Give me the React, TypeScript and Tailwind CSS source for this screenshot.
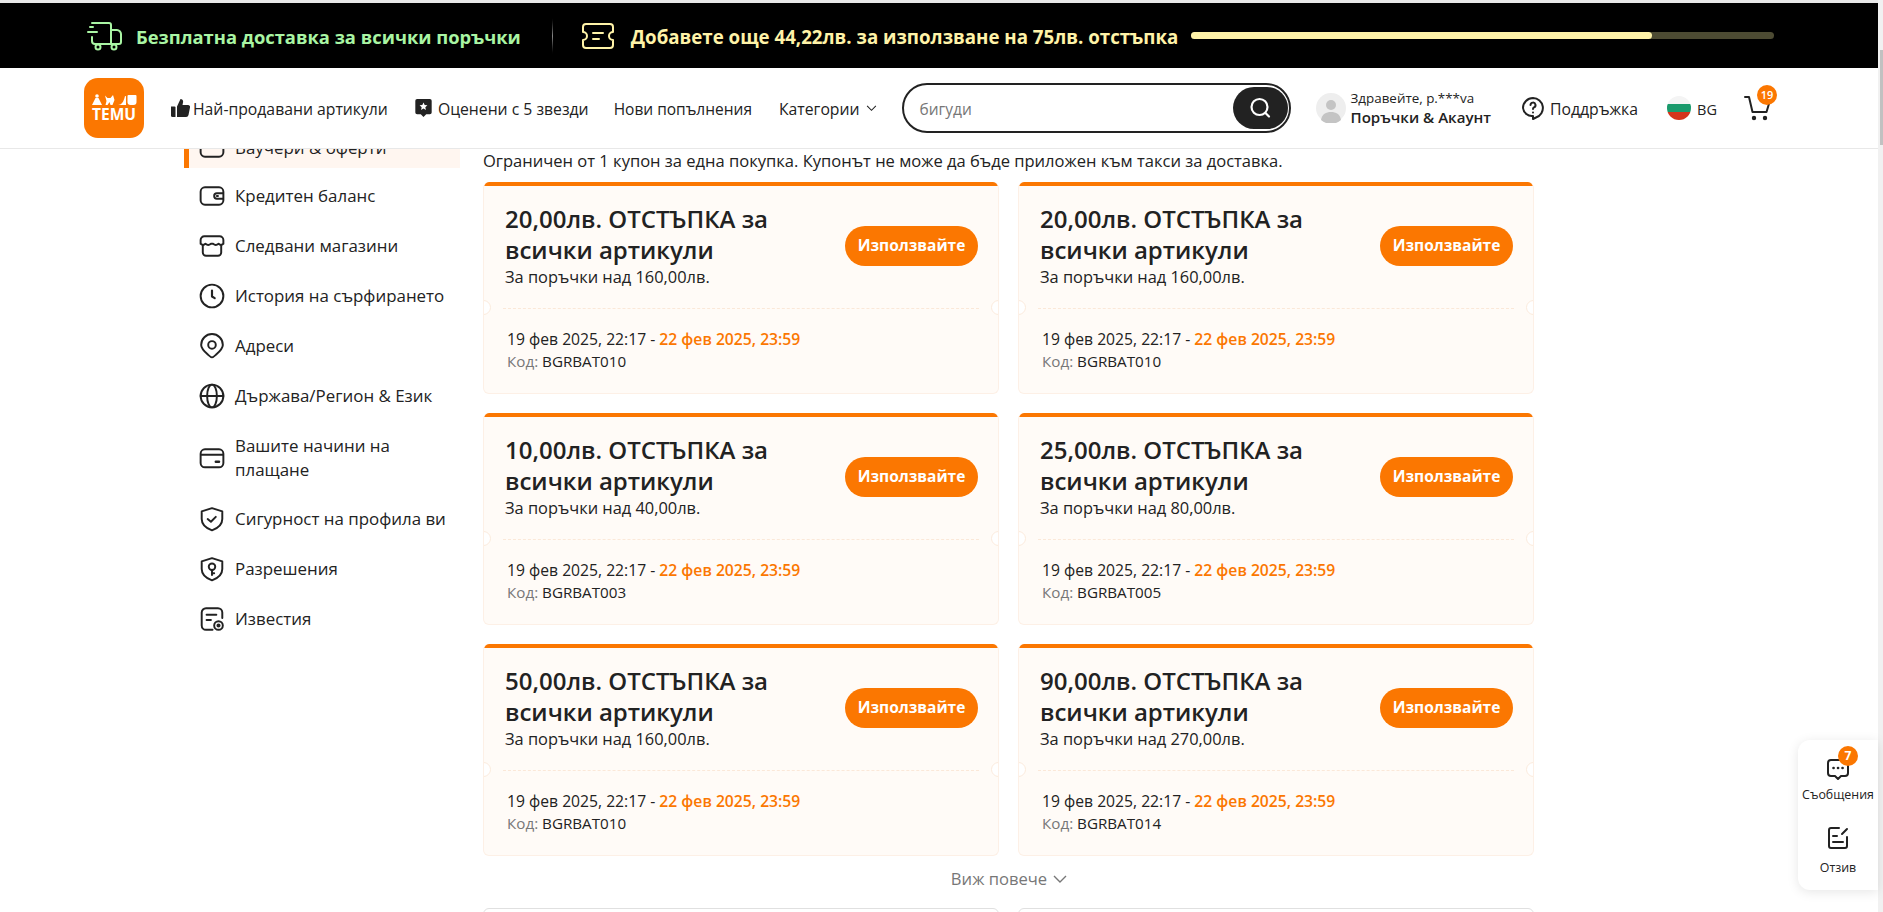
import React from 'react';

const font = { fontFamily: '"Open Sans", "Noto Sans", sans-serif' };

interface Coupon {
  amount: string;
  min: string;
  code: string;
}

const coupons: Coupon[] = [
  { amount: '20,00', min: '160,00', code: 'BGRBAT010' },
  { amount: '20,00', min: '160,00', code: 'BGRBAT010' },
  { amount: '10,00', min: '40,00', code: 'BGRBAT003' },
  { amount: '25,00', min: '80,00', code: 'BGRBAT005' },
  { amount: '50,00', min: '160,00', code: 'BGRBAT010' },
  { amount: '90,00', min: '270,00', code: 'BGRBAT014' },
];

const Ico: React.FC<{ children: React.ReactNode }> = ({ children }) => (
  <svg viewBox="0 0 24 24" fill="none" stroke="currentColor" strokeWidth="1.8" strokeLinecap="round" strokeLinejoin="round" className="w-[26px] h-[26px] shrink-0 text-[#222]">
    {children}
  </svg>
);

const sideItems: { label: React.ReactNode; icon: React.ReactNode; h: string }[] = [
  {
    label: 'Кредитен баланс',
    h: 'h-[50px]',
    icon: (
      <Ico>
        <rect x="1.5" y="4" width="21" height="16" rx="4" />
        <path d="M22 9.5h-5.5a2.5 2.5 0 0 0 0 5H22" />
        <path d="M16.5 12h1" />
      </Ico>
    ),
  },
  {
    label: 'Следвани магазини',
    h: 'h-[50px]',
    icon: (
      <Ico>
        <path d="M5 3h14a3.500 3.500 0 0 1 3.500 3.500V10c-1.500 1.400-3 1.400-4.500 0-1.700 1.400-3.300 1.400-5 0h-2c-1.700 1.400-3.300 1.400-5 0-1.500 1.400-3 1.400-4.500 0V6.500A3.500 3.500 0 0 1 5 3z" />
        <path d="M3.500 11.500V18a3 3 0 0 0 3 3h11a3 3 0 0 0 3-3v-6.500" />
      </Ico>
    ),
  },
  {
    label: 'История на сърфирането',
    h: 'h-[50px]',
    icon: (
      <Ico>
        <circle cx="12" cy="12" r="10.500" />
        <path d="M12 7v5.500l2.500 1.500" strokeWidth="2" />
      </Ico>
    ),
  },
  {
    label: 'Адреси',
    h: 'h-[50px]',
    icon: (
      <Ico>
        <path d="M12 22.500c-1 0-2-.9-3.500-2.300C5.500 17.500 2 14.500 2 11a10 10 0 0 1 20 0c0 3.500-3.500 6.500-6.500 9.200-1.500 1.400-2.500 2.300-3.500 2.300z" />
        <circle cx="12" cy="11" r="3.500" />
      </Ico>
    ),
  },
  {
    label: 'Държава/Регион & Език',
    h: 'h-[50px]',
    icon: (
      <Ico>
        <circle cx="12" cy="12" r="10.500" />
        <ellipse cx="12" cy="12" rx="4.500" ry="10.500" />
        <path d="M1.500 12h21" />
      </Ico>
    ),
  },
  {
    label: (
      <>
        Вашите начини на
        <br />
        плащане
      </>
    ),
    h: 'h-[73px]',
    icon: (
      <Ico>
        <rect x="1.500" y="4" width="21" height="16.500" rx="4" />
        <path d="M2 9h20" />
        <path d="M15.500 15.500h3" strokeWidth="2.200" />
      </Ico>
    ),
  },
  {
    label: 'Сигурност на профила ви',
    h: 'h-[50px]',
    icon: (
      <Ico>
        <path d="M12 2l9.500 3v7c0 5-4 8.500-9.500 10.500C6.500 20.500 2.500 17 2.500 12V5z" />
        <path d="M8 12l3 2.500 4.500-4.500" />
      </Ico>
    ),
  },
  {
    label: 'Разрешения',
    h: 'h-[50px]',
    icon: (
      <Ico>
        <path d="M12 2l9.500 3v7c0 5-4 8.500-9.500 10.500C6.500 20.500 2.500 17 2.500 12V5z" />
        <circle cx="12" cy="10" r="3" />
        <path d="M12 13v4.500M12 16h2" />
      </Ico>
    ),
  },
  {
    label: 'Известия',
    h: 'h-[50px]',
    icon: (
      <Ico>
        <path d="M21.500 11V6a4 4 0 0 0-4-4h-11a4 4 0 0 0-4 4v12a4 4 0 0 0 4 4h6" />
        <path d="M7 8h9M7 13h4" />
        <circle cx="18" cy="18" r="4" />
        <circle cx="18" cy="18" r="1" fill="currentColor" />
      </Ico>
    ),
  },
];

const CouponCard: React.FC<{ coupon: Coupon }> = ({ coupon }) => (
  <div className="relative h-[212px] rounded-[6px] border border-t-0 border-[#fdf0e6] bg-[#fffbf7] overflow-hidden">
    <div className="h-[4px] -mx-px bg-[#fb7701]" />
    <div className="h-[122px] pl-[21px] pr-[20px] flex items-center justify-between">
      <div className="pb-[4px]">
        <div className="w-[290px] text-[24px] leading-[31px] font-semibold text-[#222]">
          {`${coupon.amount}лв. ОТСТЪПКА за всички артикули`}
        </div>
        <div className="mt-[1px] text-[16.4px] leading-[22px] text-[#222]">{`За поръчки над ${coupon.min}лв.`}</div>
      </div>
      <button className="mb-[2px] h-[40px] w-[133px] rounded-full bg-[#fb7701] text-white text-[15.5px] font-bold">Използвайте</button>
    </div>
    <div className="mx-[19px] border-t border-dashed border-[#fbe8d8]" />
    <div className="pl-[23px] pt-[18px]">
      <div className="text-[15.7px] leading-[24px] text-[#222]">
        19 фев 2025, 22:17 - <span className="font-semibold text-[#fb7701]">22 фев 2025, 23:59</span>
      </div>
      <div className="text-[15.2px] leading-[20px] text-[#222]">
        <span className="text-[#777]">Код:</span> {coupon.code}
      </div>
    </div>
    <span className="absolute -left-[8px] top-[118px] w-[15px] h-[15px] rounded-full bg-white border border-[#fbeadc]" />
    <span className="absolute -right-[8px] top-[118px] w-[15px] h-[15px] rounded-full bg-white border border-[#fbeadc]" />
  </div>
);

export default function App() {
  return (
    <div className="h-[912px] w-full overflow-hidden flex bg-white text-[#222]" style={font}>
      <div className="flex-1 min-w-0 flex flex-col relative">
        <div className="h-[3px] bg-[#e8e8e8] shrink-0" />

        {/* top banner */}
        <div className="h-[65px] bg-black shrink-0 flex items-center pl-[87px] pr-[104px]">
          <svg viewBox="0 0 36 32" fill="none" stroke="#a9f5a3" strokeWidth="2" strokeLinecap="round" strokeLinejoin="round" className="w-[36px] h-[32px] shrink-0">
            <path d="M5 3h17a2 2 0 0 1 2 2v19H8a3 3 0 0 1-3-3v-4" />
            <path d="M24 10h6c2 0 4 2 4 4v8a2 2 0 0 1-2 2h-8" />
            <path d="M1 12h9M3 7h3" />
            <circle cx="11" cy="27" r="2.500" />
            <circle cx="27" cy="27" r="2.500" />
          </svg>
          <span className="ml-[13px] pt-[3px] text-[18.35px] font-bold text-[#a9f5a3] whitespace-nowrap">Безплатна доставка за всички поръчки</span>
          <div className="ml-[31px] w-px h-[40px] bg-gradient-to-b from-black via-[#888] to-black shrink-0" />
          <svg viewBox="0 0 34 28" fill="none" stroke="#fff3a8" strokeWidth="2" strokeLinecap="round" strokeLinejoin="round" className="ml-[28px] w-[34px] h-[28px] shrink-0">
            <path d="M5 2h24a3 3 0 0 1 3 3v5a4 4 0 0 0 0 8v5a3 3 0 0 1-3 3H5a3 3 0 0 1-3-3v-5a4 4 0 0 0 0-8V5a3 3 0 0 1 3-3z" />
            <path d="M12 11h10M12 17h6" />
          </svg>
          <span className="ml-[16px] pt-[3px] text-[18.7px] font-bold text-[#fff3a8] whitespace-nowrap">Добавете още 44,22лв. за използване на 75лв. отстъпка</span>
          <div className="ml-[13px] flex-1 h-[7px] rounded-full bg-[#4d4b33]">
            <div className="h-full w-[79%] rounded-full bg-[#fff3a8]" />
          </div>
        </div>

        {/* nav */}
        <div className="h-[81px] shrink-0 flex items-center border-b border-[#e8e8e8] bg-white pl-[84px] text-[15.75px] font-medium relative z-10">
          <div className="w-[60px] h-[60px] rounded-[14px] bg-[#fb7701] flex flex-col items-center justify-center shrink-0 text-white">
            <svg viewBox="0 0 45 11" fill="white" className="w-[45px] h-[11px]">
              <circle cx="5" cy="2" r="1.800" />
              <path d="M3.500 4h3L10 11H0z" />
              <path d="M13 1.500l2.500 2.500h3L21 1l1.500 5-2 5h-2l-1-3-2 3h-2l1-4z" />
              <path d="M26 11c3.500-.2 5.500-2.500 7-9l1 .3V11z" />
              <path d="M36.500 1h7a1 1 0 0 1 1 1v6a3 3 0 0 1-3 3h-3a3 3 0 0 1-3-3V2a1 1 0 0 1 1-1z" />
            </svg>
            <span className="mt-[1px] text-[15.5px] leading-[16px] font-bold">TEMU</span>
          </div>
          <svg viewBox="0 0 20 20" fill="#222" className="ml-[26px] w-[20px] h-[20px] shrink-0">
            <path d="M1 8.500h3.500a1 1 0 0 1 1 1V19H2.500A1.500 1.500 0 0 1 1 17.500z" />
            <path d="M7 8.500L10.500 1c2 0 3 1.500 2.500 3.500L12.500 7H18a2 2 0 0 1 2 2.500l-1.500 7.500a2.500 2.500 0 0 1-2.500 2H7z" />
          </svg>
          <span className="ml-[3px] pt-[3px] whitespace-nowrap">Най-продавани артикули</span>
          <svg viewBox="0 0 20 22" className="ml-[26px] w-[19px] h-[20px] shrink-0">
            <path d="M3 1h14a2 2 0 0 1 2 2v13a2 2 0 0 1-2 2h-4l-3 3-3-3H3a2 2 0 0 1-2-2V3a2 2 0 0 1 2-2z" fill="#222" />
            <path d="M10 5l1.300 2.800 3 .3-2.300 2 .7 3-2.700-1.600-2.700 1.600.7-3-2.300-2 3-.3z" fill="#fff" />
          </svg>
          <span className="ml-[5px] pt-[3px] whitespace-nowrap">Оценени с 5 звезди</span>
          <span className="ml-[25px] pt-[3px] text-[15.5px] whitespace-nowrap">Нови попълнения</span>
          <span className="ml-[27px] pt-[3px] whitespace-nowrap">Категории</span>
          <svg viewBox="0 0 12 8" fill="none" stroke="#222" strokeWidth="1.200" className="ml-[6px] w-[11px] h-[7px] shrink-0">
            <path d="M1 1l5 5 5-5" />
          </svg>

          <div className="ml-[25px] w-[389px] h-[50px] rounded-full border-2 border-[#222] flex items-center justify-between pl-[16px] pr-[1px] shrink-0 bg-white">
            <span className="text-[#777] text-[15.5px] font-normal pt-[3px]">бигуди</span>
            <span className="w-[55px] h-[42px] rounded-full bg-[#222] flex items-center justify-center">
              <svg viewBox="0 0 24 24" fill="none" stroke="#fff" strokeWidth="2.200" strokeLinecap="round" className="w-[24px] h-[24px]">
                <circle cx="11.500" cy="11" r="8" />
                <path d="M17.500 17l3.500 3.500" />
              </svg>
            </span>
          </div>

          <svg viewBox="0 0 30 30" className="ml-[25px] w-[30px] h-[30px] shrink-0">
            <circle cx="15" cy="15" r="15" fill="#eeeeee" />
            <circle cx="15" cy="12" r="5" fill="#c4c4c4" />
            <path d="M5 27c1-6 5-8 10-8s9 2 10 8a15 15 0 0 1-20 0z" fill="#c4c4c4" />
          </svg>
          <div className="ml-[5px] shrink-0">
            <div className="text-[13.4px] leading-[19px] font-normal whitespace-nowrap">Здравейте, p.***va</div>
            <div className="text-[15.1px] leading-[19px] font-semibold whitespace-nowrap">Поръчки & Акаунт</div>
          </div>
          <svg viewBox="0 0 24 24" fill="none" stroke="#222" strokeWidth="2" strokeLinecap="round" strokeLinejoin="round" className="ml-[30px] w-[24px] h-[24px] shrink-0">
            <path d="M12 2a10 10 0 0 1 3 19.500L12 23v-3a9 9 0 0 1-10-8A10 10 0 0 1 12 2z" />
            <path d="M9.500 9a2.500 2.500 0 1 1 3.500 2.400c-.7.400-1 .8-1 1.600" />
            <path d="M12 16.500v.1" />
          </svg>
          <span className="ml-[5px] pt-[3px] whitespace-nowrap">Поддръжка</span>
          <div className="ml-[29px] w-[24px] h-[24px] rounded-full overflow-hidden flex flex-col shrink-0">
            <span className="h-[8px] bg-[#f4f4f4]" />
            <span className="h-[8px] bg-[#1a9a6c]" />
            <span className="h-[8px] bg-[#d4351c]" />
          </div>
          <span className="ml-[6px] pt-[3px] text-[14.5px]">BG</span>
          <div className="ml-[27px] relative w-[28px] h-[28px] shrink-0">
            <svg viewBox="0 0 28 28" fill="none" stroke="#222" strokeWidth="2" strokeLinecap="round" strokeLinejoin="round" className="w-[28px] h-[28px]">
              <path d="M1 3h4l3.500 15h14l3-10" />
              <circle cx="10" cy="24" r="1.200" fill="#222" />
              <circle cx="21" cy="24" r="1.200" fill="#222" />
            </svg>
            <span className="absolute -top-[9px] left-[13px] w-[20px] h-[20px] rounded-full bg-[#fb7701] text-white text-[11px] font-semibold flex items-center justify-center">19</span>
          </div>
        </div>

        {/* page body, scrolled */}
        <div className="flex-1 min-h-0 overflow-hidden flex pl-[184px]">
          <div className="w-[276px] shrink-0 -mt-[21px] mr-[23px]">
            <div className="h-[40px] flex items-center gap-[10px] bg-[#fff6f0] border-l-[5px] border-[#fb7701] pl-[10px] text-[16.9px] whitespace-nowrap">
              <Ico>
                <rect x="1.500" y="4" width="21" height="16" rx="4" />
                <path d="M12 9v3" />
              </Ico>
              Ваучери & оферти
            </div>
            <div className="h-[3px]" />
            {sideItems.map((item, i) => (
              <div key={i} className={`${item.h} flex items-center gap-[10px] pl-[15px] text-[16.9px] leading-[24px] text-[#222]`}>
                {item.icon}
                <span className="whitespace-nowrap">{item.label}</span>
              </div>
            ))}
          </div>

          <div className="w-[1052px] shrink-0">
            <div className="h-[33px] pb-[9px] flex items-center text-[16.55px] text-[#222] whitespace-nowrap">
              Ограничен от 1 купон за една покупка. Купонът не може да бъде приложен към такси за доставка.
            </div>
            <div className="grid grid-cols-[516px_516px] gap-x-[19px] gap-y-[19px]">
              {coupons.map((c, i) => (
                <CouponCard key={i} coupon={c} />
              ))}
            </div>
            <div className="h-[52px] pb-[6px] flex items-center justify-center gap-[6px] text-[16.6px] text-[#777]">
              Виж повече
              <svg viewBox="0 0 14 9" fill="none" stroke="#777" strokeWidth="1.400" className="w-[14px] h-[9px]">
                <path d="M1 1l6 6 6-6" />
              </svg>
            </div>
            <div className="grid grid-cols-[516px_516px] gap-x-[19px]">
              <div className="h-[40px] rounded-[6px] border border-[#e0e0e0]" />
              <div className="h-[40px] rounded-[6px] border border-[#e0e0e0]" />
            </div>
          </div>
        </div>

        {/* floating help panel */}
        <div className="absolute right-0 top-[740px] w-[80px] h-[150px] bg-white rounded-l-[12px] shadow-[0_2px_12px_rgba(0,0,0,0.10)] flex flex-col items-center text-[12.4px] text-[#222]">
          <div className="relative mt-[17px]">
            <svg viewBox="0 0 24 24" fill="none" stroke="#222" strokeWidth="2" strokeLinejoin="round" className="w-[24px] h-[24px]">
              <path d="M5 3h14a3 3 0 0 1 3 3v10a3 3 0 0 1-3 3h-4l-3 3-3-3H5a3 3 0 0 1-3-3V6a3 3 0 0 1 3-3z" />
              <path d="M7.500 11h.1M12 11h.1M16.500 11h.1" strokeWidth="2.600" strokeLinecap="round" />
            </svg>
            <span className="absolute -top-[11px] left-[12px] w-[20px] h-[20px] rounded-full bg-[#fb7701] text-white text-[12px] font-bold flex items-center justify-center">7</span>
          </div>
          <span className="mt-[5px] leading-[18px]">Съобщения</span>
          <svg viewBox="0 0 24 24" fill="none" stroke="#222" strokeWidth="2" strokeLinecap="round" strokeLinejoin="round" className="mt-[22px] w-[24px] h-[24px]">
            <path d="M13 2H5a2 2 0 0 0-2 2v16a2 2 0 0 0 2 2h14a2 2 0 0 0 2-2v-9" />
            <path d="M7 10h4M7 16h10M16 8l5-5" />
          </svg>
          <span className="mt-[9px] leading-[18px]">Отзив</span>
        </div>
      </div>

      {/* scrollbar */}
      <div className="w-[5px] shrink-0 bg-[#f1f1f1] pt-[50px] pl-[2px]">
        <div className="h-[95px] bg-[#c1c1c1]" />
      </div>
    </div>
  );
}
